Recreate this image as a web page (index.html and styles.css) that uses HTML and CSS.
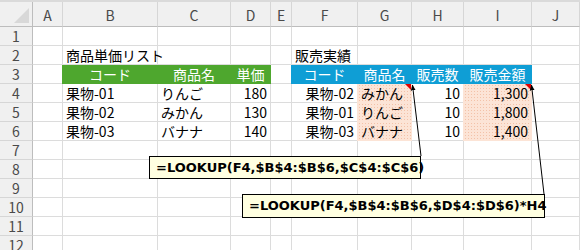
FILE: index.html
```html
<!DOCTYPE html>
<html lang="ja">
<head>
<meta charset="utf-8">
<title>LOOKUP</title>
<link rel="stylesheet" href="styles.css">
</head>
<body>
<div class="sheet">
  <div class="grid">
    <!-- column headers -->
    <div class="corner"></div>
    <div class="ch">A</div><div class="ch">B</div><div class="ch">C</div><div class="ch">D</div><div class="ch">E</div>
    <div class="ch">F</div><div class="ch">G</div><div class="ch">H</div><div class="ch">I</div><div class="ch">J</div>

    <!-- row 1 -->
    <div class="rh">1</div>
    <div class="c"></div><div class="c"></div><div class="c"></div><div class="c"></div><div class="c"></div>
    <div class="c"></div><div class="c"></div><div class="c"></div><div class="c"></div><div class="c"></div>

    <!-- row 2 -->
    <div class="rh">2</div>
    <div class="c"></div><div class="c l">商品単価リスト</div><div class="c"></div><div class="c"></div><div class="c"></div>
    <div class="c l">販売実績</div><div class="c"></div><div class="c"></div><div class="c"></div><div class="c"></div>

    <!-- row 3 -->
    <div class="rh">3</div>
    <div class="c"></div>
    <div class="c green m">コード</div><div class="c green m">商品名</div><div class="c green m">単価</div>
    <div class="c"></div>
    <div class="c blue m">コード</div><div class="c blue m">商品名</div><div class="c blue m">販売数</div><div class="c blue m">販売金額</div>
    <div class="c"></div>

    <!-- row 4 -->
    <div class="rh">4</div>
    <div class="c"></div><div class="c l">果物-01</div><div class="c l">りんご</div><div class="c r">180</div><div class="c"></div>
    <div class="c r">果物-02</div><div class="c l peach note">みかん</div><div class="c r">10</div><div class="c r peach note">1,300</div><div class="c"></div>

    <!-- row 5 -->
    <div class="rh">5</div>
    <div class="c"></div><div class="c l">果物-02</div><div class="c l">みかん</div><div class="c r">130</div><div class="c"></div>
    <div class="c r">果物-01</div><div class="c l peach">りんご</div><div class="c r">10</div><div class="c r peach">1,800</div><div class="c"></div>

    <!-- row 6 -->
    <div class="rh">6</div>
    <div class="c"></div><div class="c l">果物-03</div><div class="c l">バナナ</div><div class="c r">140</div><div class="c"></div>
    <div class="c r">果物-03</div><div class="c l peach">バナナ</div><div class="c r">10</div><div class="c r peach">1,400</div><div class="c"></div>

    <!-- rows 7-12 -->
    <div class="rh">7</div>
    <div class="c"></div><div class="c"></div><div class="c"></div><div class="c"></div><div class="c"></div>
    <div class="c"></div><div class="c"></div><div class="c"></div><div class="c"></div><div class="c"></div>
    <div class="rh">8</div>
    <div class="c"></div><div class="c"></div><div class="c"></div><div class="c"></div><div class="c"></div>
    <div class="c"></div><div class="c"></div><div class="c"></div><div class="c"></div><div class="c"></div>
    <div class="rh">9</div>
    <div class="c"></div><div class="c"></div><div class="c"></div><div class="c"></div><div class="c"></div>
    <div class="c"></div><div class="c"></div><div class="c"></div><div class="c"></div><div class="c"></div>
    <div class="rh">10</div>
    <div class="c"></div><div class="c"></div><div class="c"></div><div class="c"></div><div class="c"></div>
    <div class="c"></div><div class="c"></div><div class="c"></div><div class="c"></div><div class="c"></div>
    <div class="rh">11</div>
    <div class="c"></div><div class="c"></div><div class="c"></div><div class="c"></div><div class="c"></div>
    <div class="c"></div><div class="c"></div><div class="c"></div><div class="c"></div><div class="c"></div>
    <div class="rh">12</div>
    <div class="c"></div><div class="c"></div><div class="c"></div><div class="c"></div><div class="c"></div>
    <div class="c"></div><div class="c"></div><div class="c"></div><div class="c"></div><div class="c"></div>
  </div>

  <!-- comment connectors -->
  <svg class="arrows" width="580" height="250" viewBox="0 0 580 250">
    <defs>
      <marker id="head" viewBox="0 0 10 10" refX="9" refY="5" markerWidth="6" markerHeight="6" orient="auto">
        <path d="M0 1 L10 5 L0 9 Z" fill="#000"/>
      </marker>
    </defs>
    <line x1="421" y1="156" x2="412.5" y2="85" stroke="#000" stroke-width="1" marker-end="url(#head)"/>
    <line x1="544" y1="194" x2="531.5" y2="85" stroke="#000" stroke-width="1" marker-end="url(#head)"/>
  </svg>

  <div class="comment comment-1">=LOOKUP(F4,$B$4:$B$6,$C$4:$C$6)</div>
  <div class="comment comment-2">=LOOKUP(F4,$B$4:$B$6,$D$4:$D$6)*H4</div>
</div>
</body>
</html>
```

FILE: styles.css
```css
* {
  box-sizing: border-box;
}

html, body {
  margin: 0;
  padding: 0;
  background: #ffffff;
}

.sheet {
  position: relative;
  width: 580px;
  height: 250px;
  overflow: hidden;
  border-top: 2px solid #dadada;
  font-family: "Noto Sans CJK JP", "Noto Sans", sans-serif;
  font-size: 14px;
  color: #000;
}

.grid {
  display: grid;
  grid-template-columns: 33px 30px 95px 73px 40px 21px 66px 54px 52px 68px 48px;
  grid-template-rows: 25px repeat(12, 19px);
}

/* header strip */
.corner,
.ch,
.rh {
  background: #f0f0f0;
  color: #4a4a4a;
  display: flex;
  align-items: center;
  justify-content: center;
}

.corner {
  position: relative;
  border-right: 1px solid #bdbdbd;
  border-bottom: 1px solid #bdbdbd;
}

.corner::after {
  content: "";
  position: absolute;
  right: 3px;
  bottom: 3px;
  border-style: solid;
  border-width: 0 0 15px 15px;
  border-color: transparent transparent #d8d8d8 transparent;
}

.ch {
  border-right: 1px solid #d6d6d6;
  border-bottom: 1px solid #bdbdbd;
  padding-top: 1px;
}

.rh {
  border-right: 1px solid #bdbdbd;
  border-bottom: 1px solid #d6d6d6;
}

/* cells */
.c {
  display: flex;
  align-items: center;
  border-right: 1px solid #dcdcdc;
  border-bottom: 1px solid #dcdcdc;
  white-space: nowrap;
  line-height: 18px;
  padding: 0 3px;
  position: relative;
}

.l { justify-content: flex-start; }
.r { justify-content: flex-end; }
.m { justify-content: center; }

.green {
  background: #4ea72e;
  border-color: #4ea72e;
  box-shadow: -1px 0 0 0 #4ea72e;
  color: #fff;
}

.blue {
  background: #0f9ed5;
  border-color: #0f9ed5;
  box-shadow: -1px 0 0 0 #0f9ed5;
  color: #fff;
}

.peach {
  background-color: #fce4d6;
  background-image: radial-gradient(circle, #f3c2a8 0.6px, transparent 0.9px);
  background-size: 3px 3px;
  border-color: #fce4d6;
  box-shadow: -1px 0 0 0 #fce4d6;
}

/* comment indicator */
.note::after {
  content: "";
  position: absolute;
  top: 0;
  right: 0;
  border-style: solid;
  border-width: 0 6px 6px 0;
  border-color: transparent #e00000 transparent transparent;
}

.arrows {
  position: absolute;
  left: 0;
  top: -2px;
  pointer-events: none;
}

.comment {
  position: absolute;
  background: #ffffe1;
  border: 1px solid #000;
  font-family: "DejaVu Sans", sans-serif;
  font-weight: bold;
  font-size: 13px;
  line-height: 20px;
  padding: 1px 0 0 6px;
  white-space: nowrap;
  color: #000;
}

.comment-1 {
  left: 149px;
  top: 154px;
  width: 272px;
  height: 23px;
}

.comment-2 {
  left: 242px;
  top: 192px;
  width: 303px;
  height: 24px;
}
```
